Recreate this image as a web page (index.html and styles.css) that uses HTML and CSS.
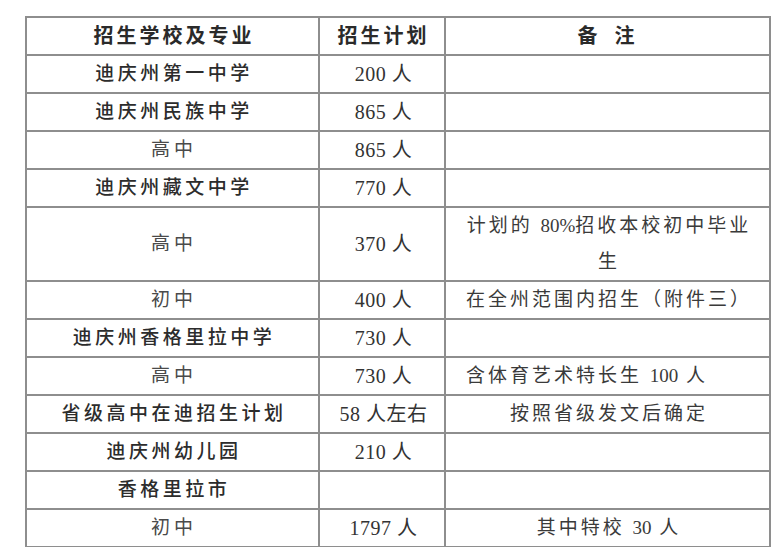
FILE: index.html
```html
<!DOCTYPE html>
<html lang="zh-CN">
<head>
<meta charset="utf-8">
<title>招生计划</title>
<link rel="stylesheet" href="styles.css">
</head>
<body>
<table class="plan">
  <colgroup>
    <col class="c-school">
    <col class="c-num">
    <col class="c-note">
  </colgroup>
  <thead>
    <tr class="row">
      <th class="hd">招生学校及专业</th>
      <th class="hd">招生计划</th>
      <th class="hd hd-note">备&nbsp;注</th>
    </tr>
  </thead>
  <tbody>
    <tr class="row"><td class="name">迪庆州第一中学</td><td class="num">200 人</td><td class="note"></td></tr>
    <tr class="row"><td class="name">迪庆州民族中学</td><td class="num">865 人</td><td class="note"></td></tr>
    <tr class="row"><td class="sub">高中</td><td class="num">865 人</td><td class="note"></td></tr>
    <tr class="row"><td class="name">迪庆州藏文中学</td><td class="num">770 人</td><td class="note"></td></tr>
    <tr class="row tall"><td class="sub">高中</td><td class="num">370 人</td><td class="note">计划的 <span class="digits">80%</span>招收本校初中毕业生</td></tr>
    <tr class="row"><td class="sub">初中</td><td class="num">400 人</td><td class="note">在全州范围内招生（附件三）</td></tr>
    <tr class="row"><td class="name">迪庆州香格里拉中学</td><td class="num">730 人</td><td class="note"></td></tr>
    <tr class="row"><td class="sub">高中</td><td class="num">730 人</td><td class="note note-left">含体育艺术特长生 <span class="digits">100</span> 人</td></tr>
    <tr class="row"><td class="name">省级高中在迪招生计划</td><td class="num">58 人左右</td><td class="note">按照省级发文后确定</td></tr>
    <tr class="row"><td class="name">迪庆州幼儿园</td><td class="num">210 人</td><td class="note"></td></tr>
    <tr class="row"><td class="name">香格里拉市</td><td class="num"></td><td class="note"></td></tr>
    <tr class="row"><td class="sub">初中</td><td class="num">1797 人</td><td class="note">其中特校 <span class="digits">30</span> 人</td></tr>
  </tbody>
</table>
</body>
</html>
```

FILE: styles.css
```css
html, body {
  margin: 0;
  padding: 0;
  background: #ffffff;
}

body {
  padding: 16px 0 0 25px;
  font-family: "Liberation Serif", "Noto Sans CJK SC", serif;
  color: #303030;
}

.plan {
  border-collapse: collapse;
  table-layout: fixed;
  width: 744px;
}

.c-school { width: 293px; }
.c-num { width: 126px; }
.c-note { width: 325px; }

.plan th,
.plan td {
  border: 2px solid #8e8e8e;
  padding: 0 0 0 3px;
  height: 36px;
  text-align: center;
  vertical-align: middle;
  line-height: 36px;
  white-space: nowrap;
}

.plan .row.tall td {
  height: 72px;
}

.hd {
  font-size: 20px;
  font-weight: 700;
  letter-spacing: 3px;
  color: #2a2a2a;
}

.hd-note {
  letter-spacing: 6px;
}

.name {
  font-size: 19px;
  font-weight: 500;
  letter-spacing: 3.5px;
  color: #2c2c2c;
}

.sub {
  font-size: 19px;
  font-weight: 400;
  letter-spacing: 4px;
  color: #4a4a4a;
}

.num {
  font-size: 20px;
  letter-spacing: 0.5px;
  color: #333333;
}

.note {
  font-size: 19px;
  letter-spacing: 3px;
  color: #3a3a3a;
}

.digits {
  letter-spacing: 0;
  line-height: 1;
}

.plan .row.tall .note {
  white-space: normal;
  padding: 0 14px 0 17px;
}

.plan .note-left {
  text-align: left;
  padding-left: 20px;
}
```
